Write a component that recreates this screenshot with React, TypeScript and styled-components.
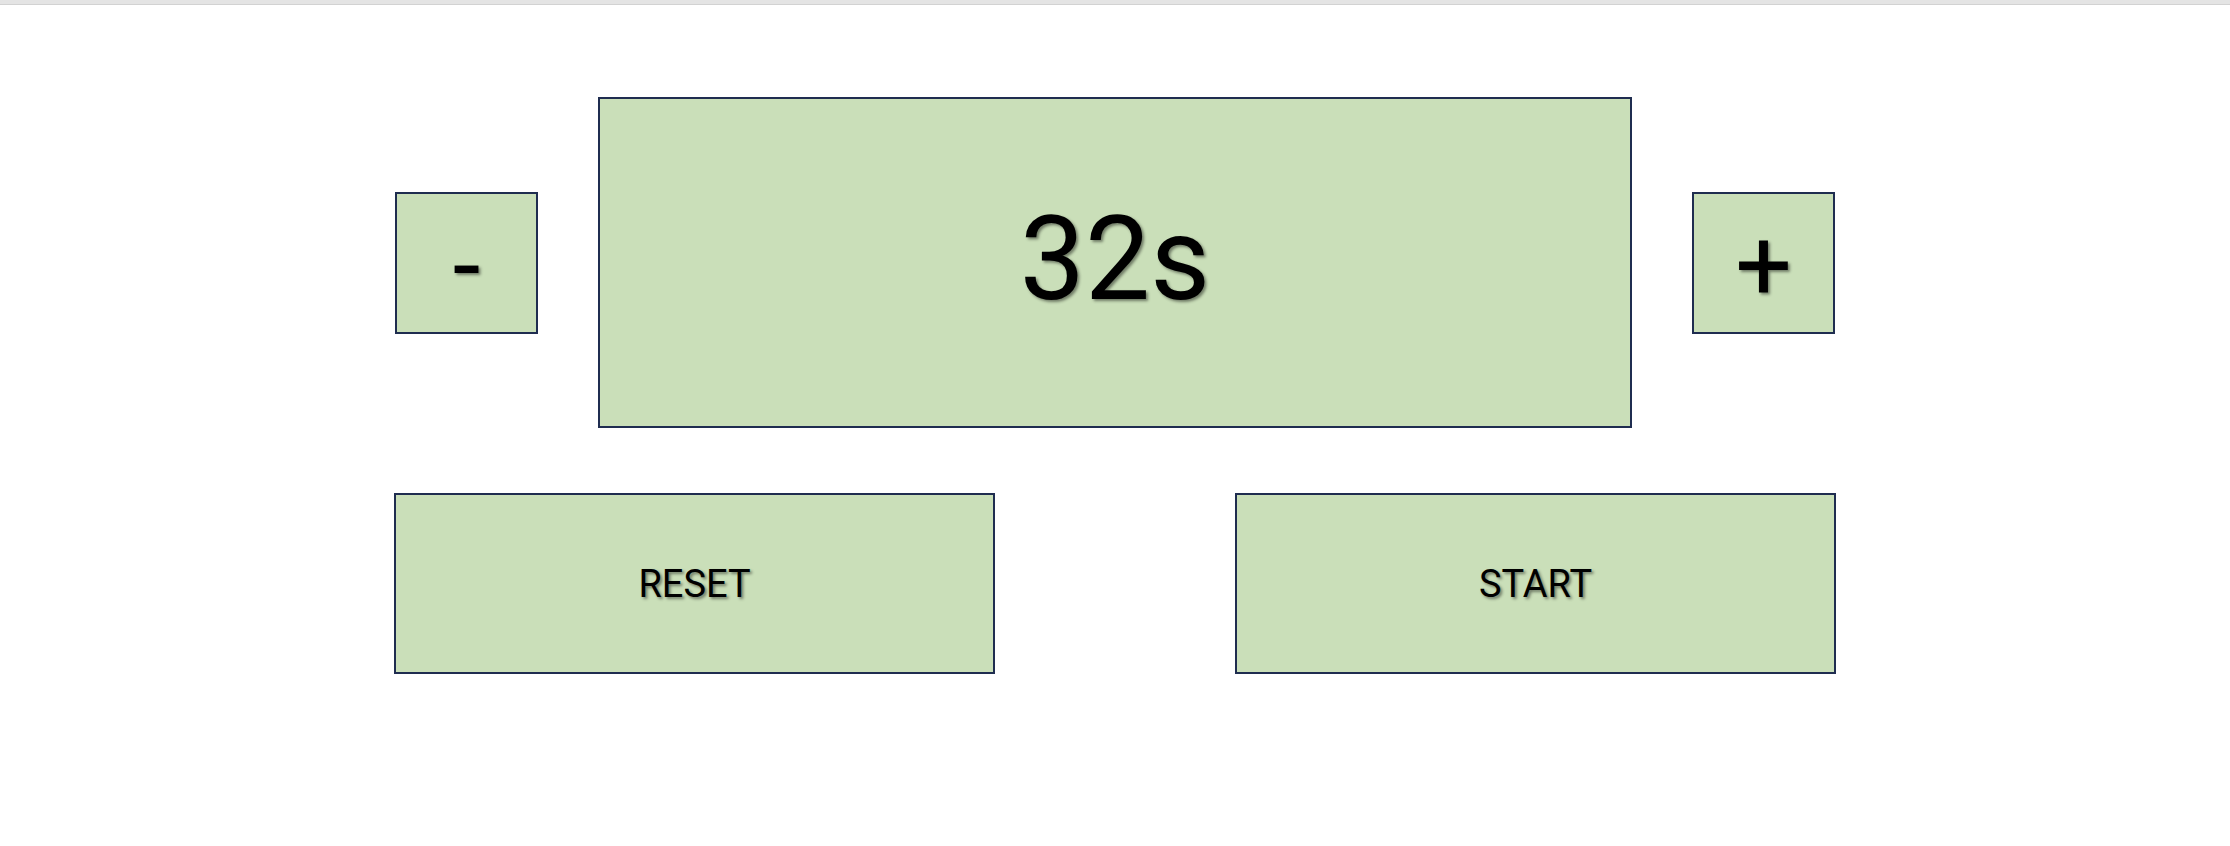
import React, { useState } from 'react';
import styled, { createGlobalStyle } from 'styled-components';

const GlobalStyle = createGlobalStyle`
  *, *::before, *::after {
    box-sizing: border-box;
  }
  body {
    margin: 0;
    background: #ffffff;
    font-family: Roboto, 'Liberation Sans', Arial, sans-serif;
  }
`;

const TopStrip = styled.div`
  height: 5px;
  background: #e4e4e4;
  border-bottom: 1px solid #d2d2d2;
`;

const Container = styled.div`
  display: flex;
  flex-direction: column;
  align-items: center;
  padding-top: 92px;
`;

const Row = styled.div`
  display: flex;
  align-items: center;
  gap: 60px;
`;

const ButtonRow = styled.div`
  display: flex;
  gap: 240px;
  margin-top: 65px;
`;

const Box = styled.div`
  display: flex;
  justify-content: center;
  align-items: center;
  background-color: #cadfb9;
  border: 2px solid #1f2d50;
  color: #000000;
  text-shadow: 2px 2px 3px rgba(0, 0, 0, 0.45);
`;

const Display = styled(Box)`
  width: 1034px;
  height: 331px;
  font-size: 116px;
  padding-bottom: 8px;
`;

const StepButton = styled(Box).attrs({ as: 'button' })`
  width: 143px;
  height: 142px;
  font-family: Roboto, 'Liberation Sans', Arial, sans-serif;
  font-size: 100px;
  line-height: 1;
  padding: 6px 0 0;
  cursor: pointer;
`;

const ActionButton = styled(Box).attrs({ as: 'button' })`
  width: 601px;
  height: 181px;
  font-family: Roboto, 'Liberation Sans', Arial, sans-serif;
  font-size: 38px;
  padding: 0;
  cursor: pointer;
`;

const App = () => {
  const [seconds, setSeconds] = useState(32);

  return (
    <>
      <GlobalStyle />
      <TopStrip />
      <Container>
        <Row>
          <StepButton onClick={() => setSeconds((s) => Math.max(0, s - 1))}>-</StepButton>
          <Display>{seconds}s</Display>
          <StepButton onClick={() => setSeconds((s) => s + 1)}>+</StepButton>
        </Row>
        <ButtonRow>
          <ActionButton onClick={() => setSeconds(32)}>RESET</ActionButton>
          <ActionButton>START</ActionButton>
        </ButtonRow>
      </Container>
    </>
  );
};

export default App;
